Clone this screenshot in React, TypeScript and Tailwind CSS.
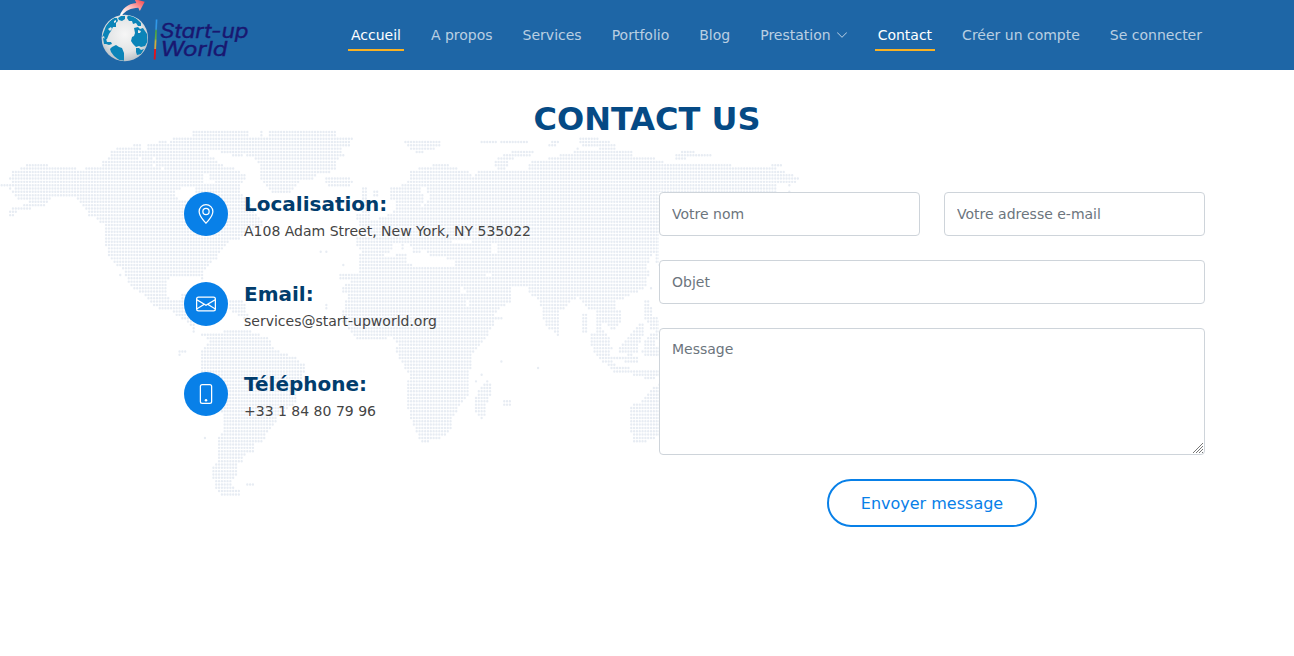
import React from "react";
import { BsChevronDown, BsEnvelope, BsGeoAlt, BsPhone } from "react-icons/bs";

type Point = [number, number];

// Coastlines, three units to a pixel, origin at the top left of the map.
const LAND: string[] = [
  // North America and Greenland
  "0,190 35,190 25,175 35,155 60,150 65,140 85,130 145,130 150,142 225,142 235,152 250,152 260,142 303,142 303,125 330,110 330,95 345,85 395,82 395,72 420,72 422,90 440,90 440,72 500,70 515,60 520,52 575,50 575,31 742,31 745,52 778,52 778,31 788,31 790,52 803,52 803,31 1007,31 1007,52 1062,52 1062,60 1050,64 1050,75 1025,85 1030,110 1005,120 1005,150 990,155 985,160 950,165 945,175 910,180 880,200 868,225 830,225 800,205 785,185 775,160 775,130 760,110 735,105 705,108 665,98 655,87 630,92 628,110 650,120 665,135 700,140 720,160 740,165 740,180 720,190 718,220 740,235 760,270 770,290 795,310 780,320 735,335 715,358 685,362 665,390 645,420 615,445 610,460 615,480 600,475 575,465 520,468 500,480 497,515 510,540 540,540 545,520 570,515 570,540 565,560 590,640 640,640 660,660 580,640 560,600 525,590 520,575 505,570 460,562 450,550 430,520 400,510 385,490 370,455 340,425 320,400 313,360 315,330 310,310 295,310 290,290 265,288 262,270 230,235 190,230 150,235 130,258 100,255 90,267 50,272 35,289 25,289 28,275 40,262 60,256 85,252 85,242 45,235 35,215 45,200 25,209 15,200 0,199",
  "470,64 500,64 500,71 470,71",
  // Caribbean
  "685,540 735,545 738,570 748,590 735,600 690,570",
  // South America
  "600,640 625,642 690,630 730,625 770,640 805,655 820,685 850,700 890,715 912,735 910,765 885,810 885,850 860,870 830,890 825,915 800,940 790,965 765,970 760,995 735,1000 730,1025 710,1035 708,1065 695,1080 700,1105 725,1110 715,1127 670,1127 645,1110 640,1085 635,1050 650,1025 655,950 668,940 668,885 600,760 600,690 615,680 625,665",
  "535,688 557,688 557,697 543,705 535,705",
  "735,1087 760,1087 760,1097 735,1097",
  // Iceland and the British Isles
  "970,172 1052,172 1055,187 1045,200 980,200",
  "1065,280 1085,280 1080,250 1088,205 1099,205 1104,240 1110,290 1120,330 1090,345",
  "1122,212 1132,212 1138,230 1122,230",
  // Arctic islands
  "1210,63 1325,63 1325,75 1310,81 1305,90 1255,99 1220,82",
  "1437,62 1487,62 1487,71 1437,71",
  "1497,52 1505,62 1580,62 1580,71 1497,71",
  "1640,74 1655,62 1675,62 1672,70 1660,80 1640,81",
  "1735,52 1790,52 1800,62 1825,65 1850,77 1850,92 1805,91 1790,80 1750,78 1735,71",
  "1480,138 1485,120 1510,105 1545,93 1597,93 1597,105 1575,112 1525,118 1520,140 1485,142",
  "2045,92 2080,92 2080,103 2138,103 2138,112 2055,113 2055,123 2028,123 2028,102",
  "2315,131 2350,131 2350,141 2315,141",
  // Europe, Asia and Africa
  "1168,205 1200,200 1225,180 1228,155 1250,150 1255,143 1290,140 1300,132 1345,132 1347,141 1375,143 1375,152 1405,152 1405,162 1420,170 1430,152 1485,151 1490,142 1515,142 1525,152 1580,151 1585,135 1600,122 1650,115 1670,115 1680,102 1700,105 1725,92 1750,92 1895,92 1895,108 1920,113 1990,117 1995,130 2195,132 2200,141 2320,143 2350,153 2355,162 2380,165 2400,176 2390,188 2325,195 2325,240 1980,240 1980,440 1965,430 1960,395 1950,408 1940,440 1950,455 1940,475 1935,500 1910,515 1880,532 1850,542 1850,565 1865,570 1865,605 1850,615 1840,630 1825,620 1815,605 1800,610 1805,630 1828,650 1828,680 1800,690 1785,660 1785,570 1760,570 1755,550 1730,532 1710,545 1690,565 1675,575 1675,600 1680,647 1668,647 1660,630 1642,628 1635,605 1622,585 1622,560 1610,535 1590,525 1580,500 1535,500 1530,545 1515,558 1495,568 1480,590 1505,592 1505,600 1485,600 1480,615 1460,650 1440,675 1412,710 1410,750 1405,785 1410,825 1380,850 1360,890 1350,930 1320,957 1285,965 1260,967 1250,945 1235,910 1225,870 1218,845 1225,760 1205,730 1185,695 1195,670 1175,652 1135,658 1075,658 1050,635 1022,600 1022,570 1035,560 1040,520 1022,520 1022,512 1040,490 1055,478 1015,478 1015,463 1070,460 1080,440 1072,430 1075,408 1085,395 1070,375 1070,355 1110,350 1110,315 1075,285 1120,300 1170,280 1190,265 1185,240 1168,235",
  // Madagascar and its neighbours
  "1420,852 1430,815 1445,795 1460,782 1478,792 1475,820 1460,855 1455,885 1440,897 1420,875",
  "1505,850 1515,840 1531,840 1529,856 1505,856",
  // South-east Asia
  "1745,580 1758,580 1758,635 1745,635",
  "1767,640 1790,645 1830,655 1835,685 1830,710 1910,710 1910,727 1840,722 1850,738 1890,741 1895,757 1845,757 1815,732 1785,703 1767,670",
  "1850,690 1875,665 1910,615 1930,603 1930,635 1920,665 1910,695 1890,707 1860,701",
  "1930,540 1950,540 1955,580 1980,603 1980,640 1950,630 1945,610 1930,588",
  "1930,660 1950,650 1955,635 1972,640 1965,675 1978,680 1978,710 1945,710 1925,700",
  "1895,750 1980,748 1980,765 1895,768",
  "1928,770 1965,770 1965,778 1928,778",
  // Australia
  "1888,858 1920,845 1940,828 1950,810 1980,788 1980,950 1955,955 1930,967 1900,967 1895,940 1885,915",
];

const WATER: string[] = [
  "525,218 550,200 585,203 588,222 560,242 535,242",
  "607,162 625,165 625,176 642,178 640,190 607,192",
  "413,112 421,112 421,121 413,121",
  "455,112 463,112 463,121 455,121",
  "457,131 466,131 466,141 457,141",
  "480,142 490,142 490,152 480,152",
  "1140,410 1175,390 1175,368 1202,372 1202,390 1215,388 1215,370 1235,380 1235,400 1255,400 1275,390 1290,408 1320,410 1360,420 1370,440 1320,443 1290,435 1250,440 1225,430 1215,402",
  "1355,360 1412,362 1412,373 1355,371",
  "1470,370 1487,370 1487,400 1470,400",
  "1265,205 1275,205 1272,215 1287,218 1285,240 1270,262 1262,255 1272,235 1262,215",
  "1376,498 1388,498 1396,520 1386,520",
  "1396,535 1404,535 1410,555 1400,555",
  "1460,460 1470,460 1470,469 1460,469",
];

const ISLETS: Point[] = [
  [618, 953], [1425, 783], [1448, 763], [1507, 723], [1617, 743], [1026, 436], [965, 396], [974, 396],
  [358, 466], [2370, 197], [2370, 212], [1728, 85], [1728, 97], [1956, 505], [980, 555], [980, 567],
];

const STEP_X = 8.47;
const STEP_Y = 9.975;

const parse = (outline: string): Point[] =>
  outline.split(" ").map((pair) => pair.split(",").map(Number) as Point);

function crossings(polygon: Point[], y: number): number[] {
  const xs: number[] = [];
  polygon.forEach(([x1, y1], i) => {
    const [x2, y2] = polygon[(i + 1) % polygon.length];
    if (y1 <= y !== y2 <= y) xs.push(x1 + ((y - y1) / (y2 - y1)) * (x2 - x1));
  });
  return xs.sort((a, b) => a - b);
}

const covers = (xs: number[], x: number) => xs.filter((edge) => edge < x).length % 2 === 1;

function buildDots(): string {
  const land = LAND.map(parse);
  const water = WATER.map(parse);
  const dot = (x: number, y: number) =>
    `M${(x - 3.5).toFixed(1)} ${y.toFixed(1)}a3.5 3.7 0 1 1 7 0a3.5 3.7 0 1 1 -7 0z`;
  let path = "";
  for (let row = 0; row < 111; row++) {
    const y = 36 + row * STEP_Y;
    const landXs = land.map((p) => crossings(p, y));
    const waterXs = water.map((p) => crossings(p, y));
    for (let col = 0; col < 284; col++) {
      const x = 4 + col * STEP_X;
      if (landXs.some((xs) => covers(xs, x)) && !waterXs.some((xs) => covers(xs, x))) path += dot(x, y);
    }
  }
  ISLETS.forEach(([x, y]) => {
    path += dot(4 + Math.round((x - 4) / STEP_X) * STEP_X, 36 + Math.round((y - 36) / STEP_Y) * STEP_Y);
  });
  return path;
}

const DOTS = buildDots();

function WorldMap() {
  return (
    <svg className="pointer-events-none absolute left-0 top-[50px] -z-10" width="804" height="380" viewBox="-1 0 2412 1140" aria-hidden="true">
      <path d={DOTS} fill="#e7ecf3" />
    </svg>
  );
}

function Logo() {
  return (
    <svg width="152" height="70" viewBox="0 0 152 70" className="block" role="img" aria-label="Start-up World">
      <defs>
        <radialGradient id="land" cx="0.5" cy="0.42" r="0.6">
          <stop offset="0" stopColor="#f6f6f6" />
          <stop offset="0.65" stopColor="#e2e4e5" />
          <stop offset="1" stopColor="#b5bec5" />
        </radialGradient>
        <linearGradient id="arrow" x1="0" y1="1" x2="1" y2="0">
          <stop offset="0.1" stopColor="#ffffff" />
          <stop offset="0.45" stopColor="#fbc4c4" />
          <stop offset="0.95" stopColor="#f5474d" />
        </linearGradient>
        <linearGradient id="bar" x1="0" y1="0" x2="0" y2="1">
          <stop offset="0" stopColor="#2d9bf0" />
          <stop offset="0.24" stopColor="#3595dd" />
          <stop offset="0.28" stopColor="#43a345" />
          <stop offset="0.48" stopColor="#66ac42" />
          <stop offset="0.54" stopColor="#c9b33c" />
          <stop offset="0.73" stopColor="#d8a13b" />
          <stop offset="0.75" stopColor="#ee1018" />
          <stop offset="1" stopColor="#d51522" />
        </linearGradient>
        <clipPath id="disc">
          <circle cx="26.8" cy="38" r="22.7" />
        </clipPath>
      </defs>
      <circle cx="26.8" cy="38" r="23.2" fill="url(#land)" />
      <g clipPath="url(#disc)" fill="#0b84b8">
        <path d="M8 26l4-5 4-3 3 0 1 3-2 2 0 4-3 0-2 4-2 3-2 5-2 1-1-4-2 1z" />
        <path d="M5 38l3 1 1 3 4 0 1 2-3 1-3-1-2 0z" />
        <path d="M14 47l4-2 3 2 3 1 2 5 0 8-5-1-5-4-3-4-1-3z" />
        <path d="M20 18l3-2 4 0 0 3-3 2-3-1z" />
        <path d="M30 15l5 1 4 3 4 4 0 3-3 0-2-3-3 1-1-3-3 0-2-3z" />
        <path d="M36 28l4-1 2 2 3-1 4 6 1 7-3 5-4 1-2-1-3 1-3-3-2-3 1-4 2-1 1-3z" />
        <path d="M38 48l3 0 2 2 3-1-3 5-4 1-1-3z" />
        <path d="M10 29l3-2 1 2-2 2zM16 21l2-1 0 2-2 1zM40 30l3 1-1 2-2 0z" fill="#e8eaeb" />
      </g>
      <path d="M21.7 16C24 8.5 30 3.8 38.3 3L36.5 -1L46.7 1.8L41.8 11L40.3 7.8C33 8 27 11 24 15.5z" fill="url(#arrow)" />
      <path d="M57.8 19.5h1.6l-1.8 40h-1.9z" fill="url(#bar)" />
      <g fill="#191770" stroke="#191770" strokeWidth="0.35" fontFamily="Inter, 'Liberation Sans', sans-serif" fontStyle="italic" fontWeight="400" fontSize="19.5">
        <text x="62" y="38" textLength="88.5" lengthAdjust="spacingAndGlyphs">Start-up</text>
        <text x="62.5" y="56" textLength="67" lengthAdjust="spacingAndGlyphs">World</text>
      </g>
    </svg>
  );
}

const NAV = [
  { label: "Accueil", active: true },
  { label: "A propos" },
  { label: "Services" },
  { label: "Portfolio" },
  { label: "Blog" },
  { label: "Prestation", menu: true },
  { label: "Contact", active: true },
  { label: "Créer un compte" },
  { label: "Se connecter" },
];

function Header() {
  return (
    <header className="h-[70px] bg-[#1e66a6]">
      <div className="flex h-full items-center justify-between pl-[98px] pr-[89px]">
        <a href="#">
          <Logo />
        </a>
        <nav>
          <ul className="flex gap-6">
            {NAV.map((item) => (
              <li key={item.label}>
                <a
                  href="#"
                  className={
                    item.active
                      ? "flex h-8 items-center whitespace-nowrap border-b-2 border-[#f9b123] px-[3px] pt-0.5 text-sm text-white"
                      : "flex h-8 items-center whitespace-nowrap border-b-2 border-transparent px-[3px] pt-0.5 text-sm text-white/70"
                  }
                >
                  {item.label}
                  {item.menu && <BsChevronDown className="ml-[5px] size-3" />}
                </a>
              </li>
            ))}
          </ul>
        </nav>
      </div>
    </header>
  );
}

const INFO = [
  { Icon: BsGeoAlt, title: "Localisation:", text: "A108 Adam Street, New York, NY 535022" },
  { Icon: BsEnvelope, title: "Email:", text: "services@start-upworld.org" },
  { Icon: BsPhone, title: "Téléphone:", text: "+33 1 84 80 79 96" },
];

const FIELD =
  "block w-full rounded border border-[#ced4da] bg-white px-3 text-sm text-[#212529] outline-none placeholder:text-[#6c757d]";

export default function App() {
  return (
    <div className="min-h-screen bg-white font-['DejaVu_Sans',sans-serif] text-[#444444]">
      <Header />
      <main className="relative isolate pt-[29px]">
        <WorldMap />
        <h2 className="text-center text-[32px] font-bold uppercase leading-10 text-[#054a85]">Contact us</h2>
        <div className="mt-[53px] flex justify-between pl-[184px] pr-[89px]">
          <div className="flex flex-col gap-[38px]">
            {INFO.map(({ Icon, title, text }) => (
              <div key={title} className="flex h-[52px] gap-4">
                <div className="flex size-11 shrink-0 items-center justify-center rounded-full bg-[#0880e8] text-white">
                  <Icon className="size-5" />
                </div>
                <div>
                  <h4 className="text-xl font-bold leading-6 text-[#013d6d]">{title}</h4>
                  <p className="mt-[5px] text-sm leading-[21px]">{text}</p>
                </div>
              </div>
            ))}
          </div>
          <form className="flex w-[546px] flex-col gap-6 self-start bg-white" onSubmit={(e) => e.preventDefault()}>
            <div className="grid grid-cols-2 gap-6">
              <input className={`${FIELD} h-11`} placeholder="Votre nom" />
              <input className={`${FIELD} h-11`} placeholder="Votre adresse e-mail" />
            </div>
            <input className={`${FIELD} h-11`} placeholder="Objet" />
            <div className="relative">
              <textarea className={`${FIELD} h-[127px] resize-none py-2.5 leading-[21px]`} placeholder="Message" />
              <svg className="pointer-events-none absolute bottom-[2px] right-[2px]" width="10" height="10" viewBox="0 0 10 10" aria-hidden="true">
                <path d="M0 10L10 0M3 10L10 3M6 10L10 6M9 10L10 9" stroke="#777777" strokeWidth="1" />
              </svg>
            </div>
            <button
              type="submit"
              className="h-12 w-[210px] self-center rounded-full border-2 border-[#0880e8] pt-px text-base text-[#0880e8]"
            >
              Envoyer message
            </button>
          </form>
        </div>
      </main>
    </div>
  );
}
